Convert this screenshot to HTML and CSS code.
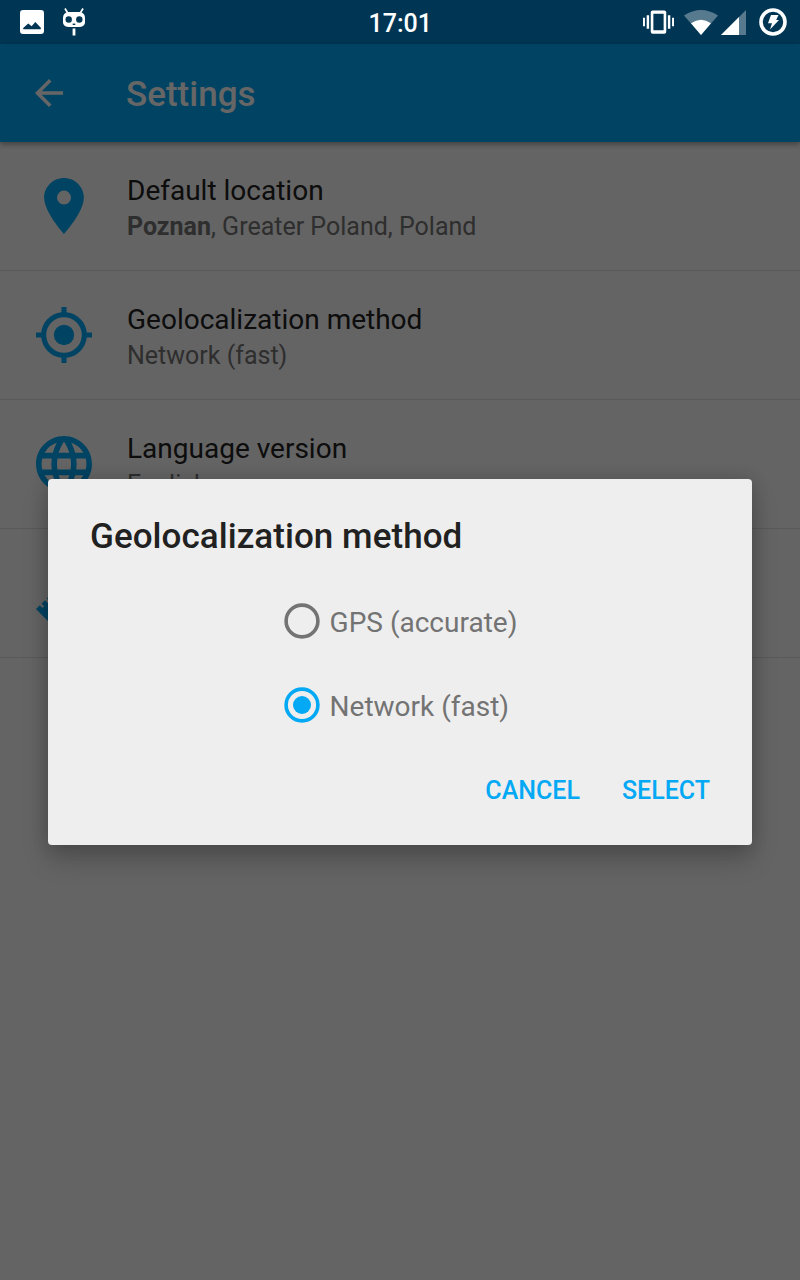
FILE: index.html
```html
<!DOCTYPE html>
<html lang="en">
<head>
<meta charset="utf-8">
<title>Settings</title>
<link rel="stylesheet" href="styles.css">
</head>
<body>
<div class="screen">
  <div class="status-bg"></div>
  <header class="app-bar">
    <svg class="back" viewBox="0 0 28 28"><path d="M28 12.25H6.7L16.5 2.5 14 0 0 14l14 14 2.5-2.5-9.8-9.75H28z"/></svg>
    <h1 class="app-title">Settings</h1>
  </header>
  <main class="list">
    <section class="item">
      <svg class="item-icon" viewBox="2 2 20 20"><path d="M12 2C8.13 2 4.9 5.13 4.9 9c0 5.25 7.1 13 7.1 13s7.1-7.75 7.1-13c0-3.87-3.23-7-7.1-7zm0 9.5a2.5 2.5 0 1 1 0-5 2.5 2.5 0 0 1 0 5z"/></svg>
      <div class="item-text"><div class="primary">Default location</div><div class="secondary"><b>Poznan</b>, Greater Poland, Poland</div></div>
    </section>
    <section class="item">
      <svg class="item-icon" viewBox="1 1 22 22"><path d="M12 8a4 4 0 1 0 0 8 4 4 0 0 0 0-8zm8.94 3A8.99 8.99 0 0 0 13 3.06V1h-2v2.06A8.99 8.99 0 0 0 3.06 11H1v2h2.06A8.99 8.99 0 0 0 11 20.94V23h2v-2.06A8.99 8.99 0 0 0 20.94 13H23v-2h-2.06zM12 19a7 7 0 1 1 0-14 7 7 0 0 1 0 14z"/></svg>
      <div class="item-text"><div class="primary">Geolocalization method</div><div class="secondary">Network (fast)</div></div>
    </section>
    <section class="item">
      <svg class="item-icon" viewBox="2 2 20 20"><path d="M11.99 2C6.47 2 2 6.48 2 12s4.47 10 9.99 10C17.52 22 22 17.52 22 12S17.52 2 11.99 2zm6.93 6h-2.95a15.65 15.65 0 0 0-1.38-3.56A8.03 8.03 0 0 1 18.92 8zM12 4.04c.83 1.2 1.48 2.53 1.91 3.96h-3.82c.43-1.43 1.08-2.76 1.91-3.96zM4.26 14C4.1 13.36 4 12.69 4 12s.1-1.36.26-2h3.38c-.08.66-.14 1.32-.14 2s.06 1.34.14 2H4.26zm.82 2h2.95c.32 1.25.78 2.45 1.38 3.56A7.99 7.99 0 0 1 5.08 16zm2.95-8H5.08a7.99 7.99 0 0 1 4.33-3.56A15.65 15.65 0 0 0 8.03 8zM12 19.96c-.83-1.2-1.48-2.53-1.91-3.96h3.82c-.43 1.43-1.08 2.76-1.91 3.96zM14.34 14H9.66c-.09-.66-.16-1.32-.16-2s.07-1.35.16-2h4.68c.09.65.16 1.32.16 2s-.07 1.34-.16 2zm.25 5.56c.6-1.11 1.06-2.31 1.38-3.56h2.95a8.03 8.03 0 0 1-4.33 3.56zM16.36 14c.08-.66.14-1.32.14-2s-.06-1.34-.14-2h3.38c.16.64.26 1.31.26 2s-.1 1.36-.26 2h-3.38z"/></svg>
      <div class="item-text"><div class="primary">Language version</div><div class="secondary">English</div></div>
    </section>
    <section class="item">
      <svg class="item-icon" viewBox="0 0 56 56"><path d="M0 44l3.8-3.7 2.6 2.6 1.7-1.7-2.6-2.6L9 35.2l4.6 4.6 1.7-1.7-4.6-4.6L44 0l12 12-44 44z"/></svg>
      <div class="item-text"><div class="primary">Units</div><div class="secondary">Metric</div></div>
    </section>
  </main>
</div>
<div class="scrim">
  <div class="status-bar">
    <div class="status-side">
      <svg class="s-image" viewBox="0 0 24 24"><path fill-rule="evenodd" d="M3 0h18q3 0 3 3v18q0 3-3 3H3q-3 0-3-3V3q0-3 3-3zM3.2 19.3h17.6v-1.5L15.3 12l-3.6 4.3L8.2 13.5 3.2 18z"/></svg>
      <svg class="s-cid" viewBox="0 0 22 28"><path d="M2 .5l3 5M20 .5l-3 5" stroke="#fff" stroke-width="1.7"/><path d="M5 4h12q5 1 5 6v5q-1 4-6 4H6q-5 0-6-4v-5q0-5 5-6zM9.6 20.5h2.8v7H9.6z"/><g class="hole"><circle cx="5.7" cy="11.5" r="3.2"/><circle cx="16.3" cy="11.5" r="3.2"/><rect x="9.7" y="15.6" width="2.6" height="1.4"/></g></svg>
    </div>
    <div class="clock">17:01</div>
    <div class="status-side status-right">
      <svg class="s-vibrate" viewBox="0 0 32 24"><path fill-rule="evenodd" d="M0 7.5h2v9H0zM3.8 5h2.5v14H3.8zM25.7 5h2.5v14h-2.5zM30 7.5h2v9h-2zM10 0h12q2 0 2 2v20q0 2-2 2H10q-2 0-2-2V2q0-2 2-2zm.7 3.5v17h10.6v-17z"/></svg>
      <svg class="s-wifi" viewBox="0 0 34 25"><path opacity=".34" d="M0 5.5Q17-5.5 34 5.5L17 25z"/><path d="M7 13.3Q17 6.2 27 13.3L17 25z"/></svg>
      <svg class="s-cell" viewBox="0 0 25 25"><path opacity=".34" d="M25 0v25H0z"/><path d="M18 7v18H0z"/></svg>
      <svg class="s-bolt" viewBox="0 0 28 28"><circle cx="14" cy="14" r="12" fill="none" stroke="#fff" stroke-width="3.6"/><path d="M12 7h7.5l-2.3 4.9H20L11 21.5l2-6.2H9z"/></svg>
    </div>
  </div>
  <div class="dialog">
    <h2 class="dialog-title">Geolocalization method</h2>
    <div class="options">
      <div class="option"><svg class="radio" viewBox="0 0 36 36"><circle cx="18" cy="18" r="15.9"/></svg><span class="option-label">GPS (accurate)</span></div>
      <div class="option"><svg class="radio radio-on" viewBox="0 0 36 36"><circle cx="18" cy="18" r="15.9"/><circle class="dot" cx="18" cy="18" r="9"/></svg><span class="option-label">Network (fast)</span></div>
    </div>
    <div class="actions"><span>CANCEL</span><span>SELECT</span></div>
  </div>
</div>
</body>
</html>
```
FILE: styles.css
```css
* { box-sizing: border-box; }
body { margin: 0; font-family: Roboto, sans-serif; background: #fafafa; }
svg { display: block; flex: none; }
h1, h2 { margin: 0; font-weight: 500; }
.screen { height: 1280px; overflow: hidden; background: #fafafa; }
.status-bg { height: 44px; background: #0288d1; }
.app-bar {
  position: relative;
  height: 98px;
  padding: 2px 35px 0;
  display: flex;
  align-items: center;
  background: #03a9f4;
  box-shadow: 0 2px 6px rgba(0, 0, 0, .4);
}
.back { width: 28px; height: 28px; fill: #fff; margin-top: -2px; }
.app-title { margin-left: 63px; padding-top: 2px; font-size: 35px; line-height: 42px; color: #fff; }
.item {
  height: 129px;
  padding: 0 36px;
  display: flex;
  align-items: center;
  border-bottom: 1px solid #dedede;
}
.item-icon { width: 56px; height: 56px; fill: #03a9f4; }
.item-text { margin-left: 35px; padding-top: 4px; white-space: nowrap; }
.primary { font-size: 28px; line-height: 38px; color: #212121; }
.secondary { font-size: 25px; line-height: 34px; color: #737373; }
.scrim { position: absolute; inset: 0; height: 1280px; background: rgba(0, 0, 0, .6); }
.status-bar {
  height: 44px;
  padding: 0 13.5px 0 20px;
  display: grid;
  grid-template-columns: 1fr auto 1fr;
  align-items: center;
}
.status-side { display: flex; align-items: center; fill: #fff; }
.status-right { justify-content: flex-end; }
.s-image { width: 24px; height: 24px; }
.s-cid { width: 22px; height: 28px; margin-left: 19px; }
.hole { fill: #013654; }
.clock { padding-top: 3px; margin-right: 6px; font-size: 25px; font-weight: 500; line-height: 30px; color: #fff; }
.s-vibrate { width: 31px; height: 24px; }
.s-wifi { width: 34px; height: 25px; margin-left: 9.5px; }
.s-cell { width: 25px; height: 25px; margin-left: 3px; }
.s-bolt { width: 28px; height: 28px; margin-left: 13px; }
.dialog {
  width: 704px;
  height: 366px;
  margin: 435px 48px 0;
  padding: 37px 42px 0;
  display: flex;
  flex-direction: column;
  border-radius: 4px;
  background: #eee;
  box-shadow: 0 14px 26px rgba(0, 0, 0, .22), 0 0 18px rgba(0, 0, 0, .14);
}
.dialog-title { font-size: 35px; line-height: 42px; letter-spacing: .05px; color: #212121; }
.options { align-self: center; margin: 21px 0 0 1px; }
.option { height: 84px; display: flex; align-items: center; }
.radio { width: 36px; height: 36px; fill: none; stroke: #737373; stroke-width: 3.6px; }
.radio-on { stroke: #03a9f4; }
.dot { fill: #03a9f4; stroke: none; }
.option-label { margin-left: 10px; padding-top: 3px; font-size: 28px; line-height: 34px; color: #737373; }
.actions { display: flex; justify-content: flex-end; gap: 42px; margin-top: 29px; font-size: 25px; font-weight: 500; line-height: 30px; color: #03a9f4; }
```
